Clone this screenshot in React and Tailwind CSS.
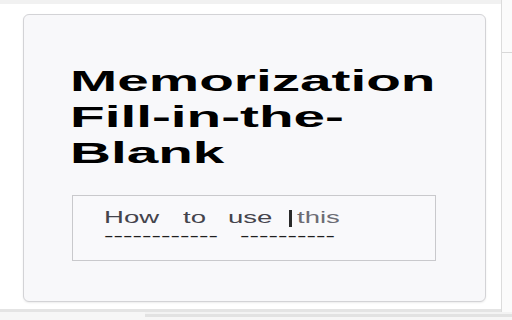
import React from "react";

const font = { fontFamily: '"Liberation Sans", Arial, sans-serif' };

function Word({ w, children, className = "" }) {
  return (
    <span className={`inline-block shrink-0 ${w}`}>
      <span className={`inline-block origin-left scale-x-[1.62] whitespace-pre ${className}`}>{children}</span>
    </span>
  );
}

export default function App() {
  return (
    <div className="w-[512px] h-[320px] bg-[#f3f3f3] overflow-hidden flex flex-col" style={font}>
      <div className="flex h-[312px]">
        <div className="w-[502px] h-[312px] pt-[4px] bg-[#f1f1f1] border-r border-[#dcdcdc]">
          <div className="w-[501px] h-[308px] bg-white border-b-[3px] border-[#e4e4e4] pt-[10px] pl-[23px]">
            <div className="w-[463px] h-[288px] rounded-[6px] border border-[#d3d3d6] bg-[#f8f8fa] shadow-[0_1px_2px_rgba(0,0,0,0.08)] pt-[48px] pl-[46px]">
              <h1 className="text-[30px] leading-[36px] font-bold text-black">
                <span className="block origin-left scale-x-[1.89] whitespace-nowrap">Memorization</span>
                <span className="block origin-left scale-x-[1.89] whitespace-nowrap">Fill-in-the-</span>
                <span className="block origin-left scale-x-[1.89] whitespace-nowrap">Blank</span>
              </h1>
              <div className="mt-[24px] ml-[2px] w-[364px] h-[66px] border border-[#c9c9cc] bg-[#f9f9fb] pt-[13px] pl-[31px] text-[17px] leading-[18px]">
                <div className="flex items-start">
                  <Word w="w-[56px]" className="text-[#44444c]">How</Word>
                  <span className="w-[23px] shrink-0" />
                  <Word w="w-[23px]" className="text-[#44444c]">to</Word>
                  <span className="w-[22px] shrink-0" />
                  <Word w="w-[44px]" className="text-[#44444c]">use</Word>
                  <span className="w-[17px] shrink-0" />
                  <span className="w-[3px] h-[17px] mt-[1px] bg-[#2a2a2a] shrink-0" />
                  <span className="w-[5px] shrink-0" />
                  <Word w="w-[44px]" className="text-[#6c6c74]">this</Word>
                </div>
                <div className="flex items-start text-[#1e1e1e]">
                  <span className="inline-block shrink-0 w-[136px]">
                    <span className="inline-block origin-left scale-x-[1.68] whitespace-pre">------------</span>
                  </span>
                  <span className="inline-block shrink-0 w-[100px]">
                    <span className="inline-block origin-left scale-x-[1.68] whitespace-pre">----------</span>
                  </span>
                </div>
              </div>
            </div>
          </div>
        </div>
        <div className="flex-1 bg-[#fbfbfb] flex flex-col">
          <div className="h-[53px] border-b border-[#d8d8d8]" />
        </div>
      </div>
      <div className="flex-1 flex">
        <div className="w-[145px] bg-[#f6f6f6]" />
        <div className="flex-1 bg-[#f6f6f6] border-t-[3px] border-[#e2e2e2] mt-[2px]" />
      </div>
    </div>
  );
}
